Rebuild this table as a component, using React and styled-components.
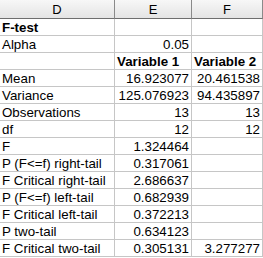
import React from "react";
import styled, { createGlobalStyle } from "styled-components";

const Global = createGlobalStyle`
  html, body { margin: 0; padding: 0; background: #fff; }
  body { font-family: "Liberation Sans", Arial, sans-serif; }
`;

const Sheet = styled.div`
  display: grid;
  grid-template-columns: 115px 77px 71px;
  grid-template-rows: 19px;
  grid-auto-rows: 17px;
  width: 263px;
`;

const Head = styled.div`
  box-sizing: border-box;
  height: 19px;
  display: flex;
  align-items: center;
  justify-content: center;
  font-size: 13px;
  color: #000;
  background: linear-gradient(#f7f7f7, #e4e4e4);
  border-right: 1px solid #8a8a8a;
  border-bottom: 1px solid #6e6e6e;
`;

const Cell = styled.div`
  box-sizing: border-box;
  height: 17px;
  display: flex;
  align-items: center;
  justify-content: ${(p) => (p.$right ? "flex-end" : "flex-start")};
  padding: 0 2px;
  font-size: 13.33px;
  font-weight: ${(p) => (p.$bold ? 700 : 400)};
  color: #000;
  white-space: nowrap;
  overflow: hidden;
  border-right: 1px solid #c6c6c6;
  border-bottom: 1px solid #c6c6c6;
`;

const rows = [
  ["F-test", "", "", true],
  ["Alpha", "0.05", ""],
  ["", "Variable 1", "Variable 2", true],
  ["Mean", "16.923077", "20.461538"],
  ["Variance", "125.076923", "94.435897"],
  ["Observations", "13", "13"],
  ["df", "12", "12"],
  ["F", "1.324464", ""],
  ["P (F<=f) right-tail", "0.317061", ""],
  ["F Critical right-tail", "2.686637", ""],
  ["P (F<=f) left-tail", "0.682939", ""],
  ["F Critical left-tail", "0.372213", ""],
  ["P two-tail", "0.634123", ""],
  ["F Critical two-tail", "0.305131", "3.277277"],
];

export default function App() {
  return (
    <>
      <Global />
      <Sheet>
        <Head>D</Head>
        <Head>E</Head>
        <Head>F</Head>
        {rows.map(([a, b, c, bold], i) => (
          <React.Fragment key={i}>
            <Cell $bold={bold}>{a}</Cell>
            <Cell $right={!bold} $bold={bold}>{b}</Cell>
            <Cell $right={!bold} $bold={bold}>{c}</Cell>
          </React.Fragment>
        ))}
      </Sheet>
    </>
  );
}
